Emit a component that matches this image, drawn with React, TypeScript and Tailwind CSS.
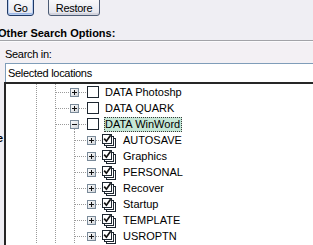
import React from "react";

type Row = { label: string; level: 2 | 3; expanded?: boolean; selected?: boolean };

const rows: Row[] = [
  { label: "DATA Photoshp", level: 2 },
  { label: "DATA QUARK", level: 2 },
  { label: "DATA WinWord", level: 2, expanded: true, selected: true },
  { label: "AUTOSAVE", level: 3 },
  { label: "Graphics", level: 3 },
  { label: "PERSONAL", level: 3 },
  { label: "Recover", level: 3 },
  { label: "Startup", level: 3 },
  { label: "TEMPLATE", level: 3 },
  { label: "USROPTN", level: 3 },
];

const DOT = "#9a9a9a";

function VLine({ x, y1 = 0, y2 = 16 }: { x: number; y1?: number; y2?: number }) {
  return (
    <line x1={x + 0.5} y1={y1} x2={x + 0.5} y2={y2} stroke={DOT} strokeWidth={1} strokeDasharray="1 1" shapeRendering="crispEdges" />
  );
}

function HLine({ x1, x2, y = 8 }: { x1: number; x2: number; y?: number }) {
  return (
    <line x1={x1} y1={y + 0.5} x2={x2} y2={y + 0.5} stroke={DOT} strokeWidth={1} strokeDasharray="1 1" shapeRendering="crispEdges" />
  );
}

function Expander({ x, minus }: { x: number; minus?: boolean }) {
  const cx = x + 4;
  return (
    <g shapeRendering="crispEdges">
      <rect x={x + 0.5} y={4.5} width={8} height={8} fill="url(#expg)" stroke="#7a8a99" />
      <rect x={cx - 2} y={8} width={5} height={1} fill="#111" />
      {!minus && <rect x={cx} y={6} width={1} height={5} fill="#111" />}
    </g>
  );
}

function Defs() {
  return (
    <defs>
      <linearGradient id="expg" x1="0" y1="0" x2="1" y2="1">
        <stop offset="0" stopColor="#ffffff" />
        <stop offset="1" stopColor="#cfd3d8" />
      </linearGradient>
    </defs>
  );
}

function Level2Svg({ expanded }: { expanded?: boolean }) {
  return (
    <svg width={98} height={16} className="shrink-0 block">
      <Defs />
      <VLine x={30} />
      <VLine x={49} />
      <HLine x1={50} x2={64} />
      <Expander x={64} minus={expanded} />
      <HLine x1={73} x2={81} />
      {expanded && <VLine x={68} y1={13} y2={16} />}
      <rect x={81.5} y={2.5} width={11} height={11} fill="#fff" stroke="#1d2630" shapeRendering="crispEdges" />
    </svg>
  );
}

function Level3Svg() {
  return (
    <svg width={116} height={16} className="shrink-0 block">
      <Defs />
      <VLine x={30} />
      <VLine x={49} />
      <VLine x={68} />
      <HLine x1={69} x2={81} />
      <Expander x={81} />
      <HLine x1={90} x2={96} />
      <g shapeRendering="crispEdges" fill="#fff" stroke="#1d2630">
        <rect x={100.5} y={6.5} width={9} height={9} />
        <rect x={98.5} y={4.5} width={9} height={9} />
        <rect x={96.5} y={2.5} width={9} height={9} />
      </g>
      <path d="M98.2 6.6 L100.4 9.2 L104.6 3.2" fill="none" stroke="#111" strokeWidth={1.7} />
    </svg>
  );
}

export default function App() {
  return (
    <div className="w-[313px] h-[245px] overflow-hidden bg-[#efeef3] text-[11px] leading-[13px] text-black flex flex-col font-['Liberation_Sans',Arial,sans-serif] tracking-[-0.3px]">
      {/* buttons */}
      <div className="h-[16px] flex items-end shrink-0">
        <button className="ml-[7px] w-[27px] h-[22px] shrink-0 flex items-end justify-center rounded-[3px] border border-[#1f3966] bg-[linear-gradient(#ffffff,#e4e5ee)] shadow-[inset_0_0_0_1px_#b7cdf0,inset_0_-2px_0_#9ab6e6] leading-[13px]">
          Go
        </button>
        <button className="ml-[14px] w-[52px] h-[22px] shrink-0 flex items-end justify-center rounded-[3px] border border-[#4c5b74] bg-[linear-gradient(#ffffff,#e3e4ec)] shadow-[inset_0_-2px_0_#d2d3dd] leading-[13px]">
          Restore
        </button>
      </div>

      {/* group header */}
      <div className="mt-[11px] -ml-[2px] h-[13px] font-bold whitespace-nowrap shrink-0 tracking-normal">Other Search Options:</div>
      <div className="h-[1px] bg-[#a2a3a8] shrink-0" />
      <div className="h-[1px] bg-[#fbfbfd] shrink-0" />

      {/* search in */}
      <div className="bg-[#f3f0f4] pt-[6px] shrink-0">
        <div className="pl-[5px] h-[13px]">Search in:</div>
        <div className="mt-[2px] ml-[5px] h-[19px] border-t border-l border-[#7f9db9] bg-white pl-[2px] pt-[3px] whitespace-nowrap">
          Selected locations
        </div>
      </div>

      {/* tree popup */}
      <div className="flex flex-1 min-h-0">
        <div className="w-[4px] shrink-0 overflow-hidden">
          <div className="mt-[50px] -ml-[10px] font-bold whitespace-nowrap">Se</div>
        </div>
        <div className="flex-1 bg-white border-t-2 border-l-2 border-[#262626] overflow-hidden tracking-normal">
          {rows.map((r) => (
            <div key={r.label} className="flex items-center h-[16px] whitespace-nowrap">
              {r.level === 2 ? <Level2Svg expanded={r.expanded} /> : <Level3Svg />}
              {r.selected ? (
                <span className="h-[15px] leading-[15px] pl-[1px] pr-[2px] bg-[#c6e7d6] outline-1 outline-dotted outline-[#3a3a3a] -outline-offset-1">
                  {r.label}
                </span>
              ) : (
                <span className="h-[15px] leading-[15px] pl-[1px]">{r.label}</span>
              )}
            </div>
          ))}
        </div>
      </div>
    </div>
  );
}
